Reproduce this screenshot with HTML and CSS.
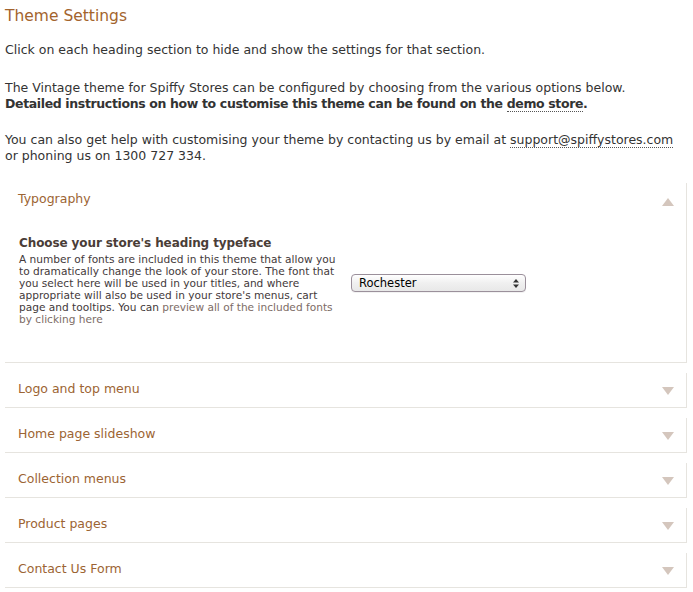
FILE: index.html
```html
<!DOCTYPE html>
<html lang="en">
<head>
<meta charset="utf-8">
<title>Theme Settings</title>
<link rel="stylesheet" href="styles.css">
</head>
<body>
<div class="page">
  <h1 class="title">Theme Settings</h1>
  <p class="intro intro-1">Click on each heading section to hide and show the settings for that section.</p>
  <p class="intro intro-2">The Vintage theme for Spiffy Stores can be configured by choosing from the various options below.<br><strong>Detailed instructions on how to customise this theme can be found on the <a class="dotted" href="#">demo store</a>.</strong></p>
  <p class="intro intro-3">You can also get help with customising your theme by contacting us by email at <a class="dotted" href="#">support@spiffystores.com</a> or phoning us on 1300 727 334.</p>

  <div class="sections">
    <section class="panel panel-open">
      <div class="panel-head">
        <span class="panel-title">Typography</span>
        <svg class="arrow" width="12" height="8" viewBox="0 0 12 8"><polygon points="6,0 12,8 0,8" fill="#d4c6bd"/></svg>
      </div>
      <div class="panel-body">
        <div class="setting-text">
          <h3 class="setting-title">Choose your store's heading typeface</h3>
          <p class="setting-desc">A number of fonts are included in this theme that allow you to dramatically change the look of your store. The font that you select here will be used in your titles, and where appropriate will also be used in your store's menus, cart page and tooltips. You can <a class="soft-link" href="#">preview all of the included fonts by clicking here</a></p>
        </div>
        <div class="select-wrap">
          <select class="font-select">
            <option>Rochester</option>
          </select>
          <svg class="select-arrows" width="6" height="9" viewBox="0 0 6 9"><polygon points="3,0 6,3.5 0,3.5" fill="#333"/><polygon points="0,5.5 6,5.5 3,9" fill="#333"/></svg>
        </div>
      </div>
    </section>

    <section class="panel">
      <div class="panel-head">
        <span class="panel-title">Logo and top menu</span>
        <svg class="arrow" width="12" height="8" viewBox="0 0 12 8"><polygon points="0,0 12,0 6,8" fill="#d4c6bd"/></svg>
      </div>
    </section>
    <section class="panel">
      <div class="panel-head">
        <span class="panel-title">Home page slideshow</span>
        <svg class="arrow" width="12" height="8" viewBox="0 0 12 8"><polygon points="0,0 12,0 6,8" fill="#d4c6bd"/></svg>
      </div>
    </section>
    <section class="panel">
      <div class="panel-head">
        <span class="panel-title">Collection menus</span>
        <svg class="arrow" width="12" height="8" viewBox="0 0 12 8"><polygon points="0,0 12,0 6,8" fill="#d4c6bd"/></svg>
      </div>
    </section>
    <section class="panel">
      <div class="panel-head">
        <span class="panel-title">Product pages</span>
        <svg class="arrow" width="12" height="8" viewBox="0 0 12 8"><polygon points="0,0 12,0 6,8" fill="#d4c6bd"/></svg>
      </div>
    </section>
    <section class="panel">
      <div class="panel-head">
        <span class="panel-title">Contact Us Form</span>
        <svg class="arrow" width="12" height="8" viewBox="0 0 12 8"><polygon points="0,0 12,0 6,8" fill="#d4c6bd"/></svg>
      </div>
    </section>
  </div>
</div>
</body>
</html>
```

FILE: styles.css
```css
html, body {
  margin: 0;
  padding: 0;
  background: #ffffff;
}

body {
  font-family: "DejaVu Sans", "Liberation Sans", sans-serif;
  font-size: 12.5px;
  line-height: 16px;
  color: #333333;
}

.page {
  padding: 0 6px 0 5px;
}

.title {
  margin: 6px 0 0 0;
  font-size: 15.5px;
  line-height: 20px;
  font-weight: normal;
  color: #a3642d;
}

.intro {
  margin: 0;
}

.intro-1 { margin-top: 16px; }
.intro-2 { margin-top: 22px; }
.intro-3 { margin-top: 20px; }

.intro strong {
  font-weight: bold;
  letter-spacing: -0.36px;
}

.dotted {
  color: inherit;
  text-decoration: none;
  border-bottom: 1px dotted #555555;
}

.sections {
  padding-top: 9px;
}

.panel {
  margin-top: 10px;
  border-right: 1px solid #e6e4df;
  border-bottom: 1px solid #e6e4df;
}

.panel-head {
  display: flex;
  align-items: center;
  justify-content: space-between;
  padding: 8px 12px 10px 13px;
  height: 16px;
}

.panel-head .arrow {
  margin-top: 4px;
  display: block;
}

.panel-open .panel-head .arrow {
  margin-top: 6px;
}

.panel-title {
  color: #9c6433;
  line-height: 16px;
}

.panel-body {
  display: flex;
  align-items: flex-start;
  padding: 18px 14px 37px 14px;
}

.setting-text {
  width: 324px;
  flex: none;
}

.setting-title {
  margin: 0 0 2px 0;
  font-size: 12px;
  line-height: 16px;
  font-weight: bold;
  color: #4a3d37;
  letter-spacing: -0.1px;
}

.setting-desc {
  margin: 0;
  font-size: 10.6px;
  line-height: 12px;
  color: #43393a;
}

.soft-link {
  color: #7d6c66;
  text-decoration: none;
}

.select-wrap {
  position: relative;
  margin: 39px 0 0 8px;
  width: 175px;
  height: 18px;
}

.font-select {
  -webkit-appearance: none;
  appearance: none;
  display: block;
  width: 175px;
  height: 18px;
  margin: 0;
  padding: 0 0 0 7px;
  border: 1px solid #9b909b;
  border-radius: 4px;
  background: linear-gradient(#ffffff, #f0f0f0 50%, #e8e8e8);
  font-family: "DejaVu Sans", "Liberation Sans", sans-serif;
  font-size: 11.5px;
  line-height: 16px;
  color: #000000;
  box-shadow: 0 1px 0 rgba(0,0,0,0.05);
}

.select-arrows {
  position: absolute;
  right: 7px;
  top: 5px;
}
```
